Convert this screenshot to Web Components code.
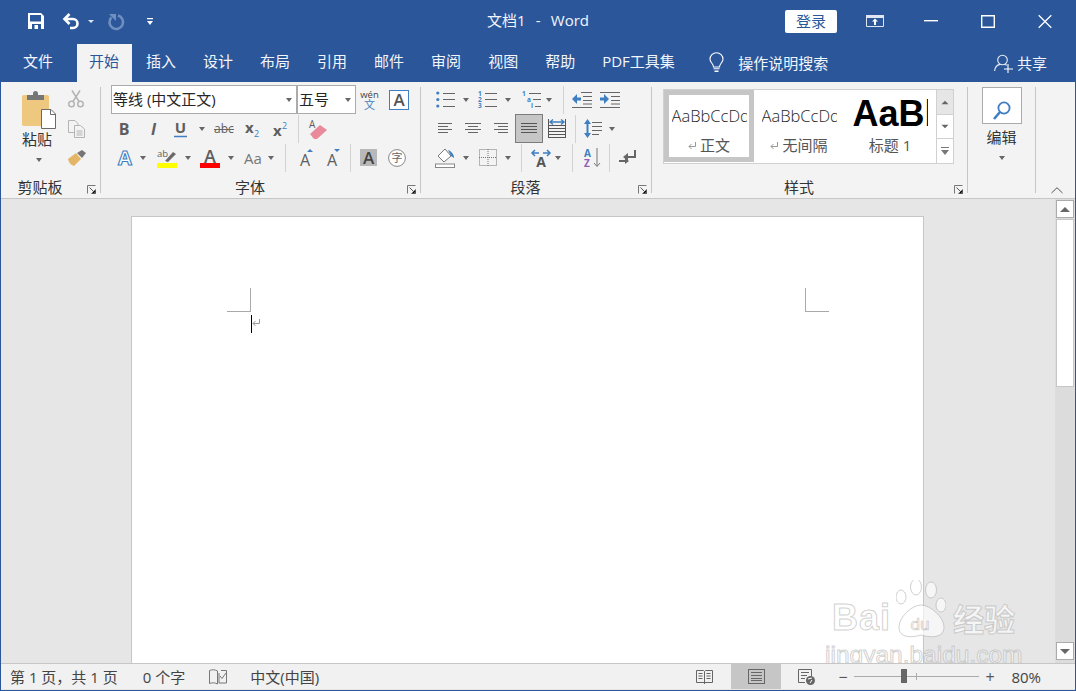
<!DOCTYPE html>
<html lang="zh-CN">
<head>
<meta charset="utf-8">
<title>文档1 - Word</title>
<style>
  html, body { margin: 0; height: 100%; overflow: hidden; background: #e6e6e6; }
  body { font-family: "Open Sans", "Noto Sans CJK SC", sans-serif; }
</style>
</head>
<body>
<word-app></word-app>
<script>
const FONT = `"Open Sans","Noto Sans CJK SC",sans-serif`;
const G = "#5e5e5e", B = "#3f7fc1", LG = "#b4b4b4";

// name: [width, height, svg inner]
const ICONS = {
  save: [16, 16, `<path fill="#fff" d="M0 0H13L16 3V16H0Z"/><path fill="#2b579a" d="M2 2H13V8.5H2ZM4 11H13V16H4Z"/><path fill="#fff" d="M6.5 12H10V16H6.5Z"/>`],
  undo: [18, 16, `<path fill="none" stroke="#fff" stroke-width="2.6" d="M3 6H11A4.5 4.5 0 0 1 11 15H8"/><path fill="none" stroke="#fff" stroke-width="2.6" d="M7.5 1L2.5 6L7.5 11"/>`],
  redo: [17, 17, `<path fill="none" stroke="#6f8fbf" stroke-width="2.6" d="M11 2.6A6.8 6.8 0 1 1 4.4 4.4"/><path fill="#6f8fbf" d="M2 1H9V8Z"/>`],
  arrowW: [6, 3, `<path fill="#dfe6f1" d="M0 0H6L3 3Z"/>`],
  custom: [6, 7, `<path fill="#fff" d="M0 0H6V1.3H0ZM0 3H6L3 7Z"/>`],
  display: [18, 12, `<path fill="none" stroke="#dfe6f1" stroke-width="1" d="M.5 .5H17.5V11.5H.5Z"/><path fill="#dfe6f1" d="M0 0H18V3H0Z"/><path fill="#fff" d="M9 3.5L12 6.5H10V10H8V6.5H6Z"/>`],
  min: [14, 2, `<path fill="#fff" d="M0 0H14V1.4H0Z"/>`],
  max: [14, 13, `<path fill="none" stroke="#fff" stroke-width="1.4" d="M.7 .7H13.3V12.3H.7Z"/>`],
  close: [14, 13, `<path fill="none" stroke="#fff" stroke-width="1.3" d="M.7 .2L13.3 12.8M13.3 .2L.7 12.8"/>`],
  bulb: [15, 20, `<path fill="none" stroke="#fff" stroke-width="1.1" d="M4.5 14C4.5 10.5 1 9.5 1 6.2A6.5 6.5 0 0 1 14 6.2C14 9.5 10.5 10.5 10.5 14Z"/><path fill="#fff" d="M4.5 15.2H10.5V16.3H4.5ZM5.5 17.5H9.5V19H5.5Z"/>`],
  person: [19, 19, `<g fill="none" stroke="#e8edf5" stroke-width="1.1"><circle cx="8.5" cy="6" r="4.8"/><path d="M.6 17C1 12.5 4 10.8 6 10.4M11 10.4L13 11.3"/><path stroke="#fff" d="M14 10V19M10 15H19"/></g>`],
  paste: [34, 38, `<rect y="4" width="27" height="31" rx="2" fill="#edc87e"/><path fill="#767676" d="M5 4H11V2.5A2.5 2.5 0 0 1 16 2.5V4H22V9H5Z"/><path fill="#fff" stroke="#6a6a6a" d="M19.5 18.5H29L33.5 23V37.5H19.5Z"/><path fill="none" stroke="#6a6a6a" d="M28.5 18.5V23.5H33.5"/>`],
  cut: [16, 18, `<g fill="none" stroke="${LG}" stroke-width="1.5"><circle cx="3.5" cy="14" r="2.8"/><circle cx="12.5" cy="14" r="2.8"/><path d="M5 11.5L12 .5M11 11.5L4 .5"/></g>`],
  copy: [17, 18, `<g fill="#f3f3f3" stroke="${LG}"><path d="M.5 .5H7L10 3.5V12.5H.5Z"/><path d="M6.5 5.5H12.5L16.5 9V17.5H6.5Z"/></g><path stroke="${LG}" d="M8.5 11H14.5M8.5 13H14.5M8.5 15H14.5"/>`],
  painter: [18, 16, `<path fill="#e3b565" d="M0 9L8 3L13 9L6 16C3 15 1 13 0 9Z"/><path fill="#767676" d="M9 3L14 0L18 3L14 8Z"/>`],
  wen: [17, 19, `<text x="8.5" y="8" font-size="9.5" text-anchor="middle" fill="#444" font-family='${FONT}'>wén</text><text x="8.5" y="19" font-size="11" text-anchor="middle" fill="${B}" font-family='${FONT}'>文</text>`],
  aBox: [20, 20, `<rect x=".5" y=".5" width="19" height="19" fill="#fff" stroke="${B}"/><text x="10" y="16" font-size="17" text-anchor="middle" fill="#555" font-weight="600" font-family='${FONT}'>A</text>`],
  arrow: [6, 4, `<path fill="#666" d="M0 0H6L3 4Z"/>`],
  bold: [12, 16, `<text x="6" y="14" font-size="16" font-weight="700" text-anchor="middle" fill="${G}" font-family='${FONT}'>B</text>`],
  italic: [13, 16, `<text x="6.5" y="14" font-size="16" font-weight="700" font-style="italic" text-anchor="middle" fill="${G}" font-family='${FONT}'>I</text>`],
  under: [13, 18, `<text x="6.5" y="13" font-size="15" font-weight="700" text-anchor="middle" fill="${G}" font-family='${FONT}'>U</text><path stroke="${B}" stroke-width="1.5" d="M0 16.5H13"/>`],
  strike: [20, 14, `<text x="10" y="11" font-size="12" text-anchor="middle" fill="${G}" font-family='${FONT}'>abc</text><path stroke="#666" d="M0 7.5H20"/>`],
  sub: [15, 16, `<text x="0" y="12" font-size="15" font-weight="700" fill="${G}" font-family='${FONT}'>x</text><text x="9" y="16" font-size="9" fill="${B}" font-family='${FONT}'>2</text>`],
  sup: [15, 16, `<text x="0" y="15" font-size="15" font-weight="700" fill="${G}" font-family='${FONT}'>x</text><text x="9" y="8" font-size="9" fill="${B}" font-family='${FONT}'>2</text>`],
  eraser: [19, 20, `<text x="0" y="9" font-size="10" fill="${G}" font-family='${FONT}'>A</text><path fill="#e98a9b" d="M1 15L11 6L18 11L8 20H5Z"/>`],
  effect: [16, 18, `<text x="8" y="16" font-size="20" font-weight="700" text-anchor="middle" fill="#fff" stroke="${B}" stroke-width="1.1" font-family='${FONT}'>A</text>`],
  hilite: [20, 20, `<text x="0" y="9" font-size="9.5" fill="${G}" font-family='${FONT}'>ab</text><path fill="#6a6a6a" d="M8 13L16 4L19 6L11 14Z"/><rect y="15" width="20" height="5" fill="#ff0"/>`],
  color: [20, 20, `<text x="10" y="14.5" font-size="18" font-weight="600" text-anchor="middle" fill="${G}" font-family='${FONT}'>A</text><rect y="15" width="20" height="5" fill="#f00"/>`],
  case: [18, 16, `<text x="9" y="14" font-size="15" text-anchor="middle" fill="#777" font-family='${FONT}'>Aa</text>`],
  grow: [14, 18, `<text x="6" y="17" font-size="16" text-anchor="middle" fill="${G}" font-family='${FONT}'>A</text><path fill="${B}" d="M8 3L11 0L14 3Z"/>`],
  shrink: [14, 18, `<text x="6" y="17" font-size="16" text-anchor="middle" fill="${G}" font-family='${FONT}'>A</text><path fill="${B}" d="M8 0H14L11 3Z"/>`],
  shade: [17, 17, `<rect width="17" height="17" fill="#b8b8b8"/><text x="8.5" y="15" font-size="17" font-weight="600" text-anchor="middle" fill="#444" font-family='${FONT}'>A</text>`],
  ring: [18, 18, `<circle cx="9" cy="9" r="8.4" fill="#fff" stroke="#888"/><text x="9" y="13" font-size="11" text-anchor="middle" fill="#666" font-family='${FONT}'>字</text>`],
  bullets: [19, 17, `<g fill="${B}"><circle cx="1.8" cy="2" r="1.6"/><circle cx="1.8" cy="8.5" r="1.6"/><circle cx="1.8" cy="15" r="1.6"/></g><path stroke="#666" d="M7 2.5H19M7 8.5H19M7 15.5H19"/>`],
  nums: [19, 17, `<g fill="${B}" font-size="6.5" font-weight="700" font-family='${FONT}'><text x="0" y="5">1</text><text x="0" y="11">2</text><text x="0" y="17">3</text></g><path stroke="#666" d="M7 2.5H19M7 8.5H19M7 15.5H19"/>`],
  multi: [19, 17, `<g fill="${B}" font-size="6.5" font-weight="700" font-family='${FONT}'><text x="0" y="5">1</text><text x="5" y="11">a</text><text x="9" y="17">i</text></g><path stroke="#666" d="M7 2.5H19M11 8.5H19M13 15.5H19"/>`],
  outdent: [20, 16, `<path stroke="#666" d="M9 .5H20M11 4.5H20M11 8.5H20M11 12H20M0 15.5H20"/><path fill="${B}" d="M0 7L5 2V5.5H9V8.5H5V12Z"/>`],
  indent: [20, 16, `<path stroke="#666" d="M0 .5H20M11 4.5H20M11 8.5H20M11 12H20M0 15.5H20"/><path fill="${B}" d="M9 7L4 2V5.5H0V8.5H4V12Z"/>`],
  left: [14, 11, `<path stroke="#666" d="M0 .5H14M0 3.5H10M0 6.5H14M0 9.5H10"/>`],
  center: [16, 11, `<path stroke="#666" d="M0 .5H16M3 3.5H13M0 6.5H16M3 9.5H13"/>`],
  right: [14, 11, `<path stroke="#666" d="M0 .5H14M4 3.5H14M0 6.5H14M4 9.5H14"/>`],
  justifyOn: [28, 29, `<rect x=".5" y=".5" width="27" height="28" fill="#c6c6c6" stroke="#7c7c7c"/><path stroke="#555" d="M6 9.5H22M6 12.5H22M6 15.5H22M6 18.5H22"/>`],
  dist: [18, 19, `<path stroke="#555" d="M0 6.5H18M0 9.5H18M0 12.5H18M0 15.5H18M0 18.5H18M.5 0V19M17.5 0V19"/><path fill="none" stroke="${B}" stroke-width="1.4" d="M2 3H16M5 .5L2 3L5 5.5M13 .5L16 3L13 5.5"/>`],
  spacing: [18, 19, `<path stroke="#666" d="M8 3.5H18M8 7.5H18M8 11.5H18M8 15.5H15"/><path fill="${B}" d="M3.5 0L7 5H4.5V14H7L3.5 19L0 14H2.5V5H0Z"/>`],
  fill: [20, 20, `<path fill="#fff" stroke="#777" d="M3 8L10 1L16 8L9 14Z"/><path fill="${B}" d="M13 2C16 3 19 6 19 10L16 8Z"/><rect x=".5" y="16" width="19" height="3.5" fill="#fff" stroke="#888"/>`],
  border: [18, 17, `<path fill="none" stroke="#777" stroke-dasharray="1 1" d="M.5 .5H17.5V16.5H.5ZM9 0V17M0 8.5H18"/>`],
  dir: [20, 18, `<text x="10" y="18" font-size="14" font-weight="700" text-anchor="middle" fill="#555" font-family='${FONT}'>A</text><path fill="none" stroke="${B}" stroke-width="1.5" d="M1 4H8M4 1L1 4L4 7M12 4H19M16 1L19 4L16 7"/>`],
  sort: [17, 19, `<text x="0" y="9" font-size="10" font-weight="700" fill="${B}" font-family='${FONT}'>A</text><text x="0" y="19" font-size="10" font-weight="700" fill="#8e5fb4" font-family='${FONT}'>Z</text><path fill="none" stroke="#777" d="M13 0V18M10 15L13 18.5L16 15"/>`],
  pilcrow: [17, 15, `<path fill="none" stroke="#666" stroke-width="2" d="M16 0V7H7"/><path fill="#666" d="M9 3V11L4 7Z"/><path stroke="#666" stroke-width="2" d="M0 11H8"/><path fill="#666" d="M6 8V14L10 11Z"/>`],
  launcher: [9, 9, `<path fill="none" stroke="#777" d="M.5 8.5V.5H8.5"/><path stroke="#555" d="M2.5 2.5L8 8M4.5 8.5H8.5V4.5"/>`],
  search: [18, 19, `<circle cx="11" cy="7" r="5.6" fill="none" stroke="${B}" stroke-width="1.8"/><path stroke="${B}" stroke-width="2.6" d="M7 11L1 18"/>`],
  chevron: [12, 6, `<path fill="none" stroke="#555" d="M.5 6L6 .7L11.5 6"/>`],
  up: [10, 5, `<path fill="#666" d="M0 5L5 0L10 5Z"/>`],
  down: [10, 5, `<path fill="#666" d="M0 0H10L5 5Z"/>`],
  more: [8, 8, `<path fill="#777" d="M0 0H8V1H0ZM0 3H8L4 8Z"/>`],
  proof: [18, 16, `<path fill="none" stroke="#777" d="M.5 1.5C3 .5 6 .5 8.5 2V15C6 13.5 3 13.5 .5 14.5ZM10 4V14L17.5 14V1.5L12 1.5"/><path fill="none" stroke="#777" d="M11 7L13 9.5L17 4"/>`],
  read: [17, 16, `<path fill="none" stroke="#666" d="M.5 1.5H7.5L8.5 2.5L9.5 1.5H16.5V13.5H.5ZM8.5 2.5V15"/><path stroke="#666" d="M2.5 4.5H6.5M2.5 7H6.5M2.5 9.5H6.5M10.5 4.5H14.5M10.5 7H14.5M10.5 9.5H14.5"/>`],
  print: [17, 15, `<rect x=".5" y=".5" width="16" height="14" fill="none" stroke="#666"/><path stroke="#666" d="M3 3.5H14M3 6.5H14M3 9.5H14M3 11.5H14"/>`],
  web: [17, 16, `<path fill="none" stroke="#666" d="M.5 .5H13.5V8M.5 .5V13.5H7"/><path stroke="#666" d="M3 3.5H11M3 6.5H9M3 9.5H7"/><circle cx="12.5" cy="11.5" r="4.5" fill="#666"/><path stroke="#fff" d="M10 10L14 9M12 14L14 11"/>`],
  ret: [8, 9, `<path fill="none" stroke="#999" d="M7.5 1V5.5H1"/><path fill="none" stroke="#999" d="M3.5 3L1 5.5L3.5 8"/>`],
};

class WordIcon extends HTMLElement {
  connectedCallback() {
    if (this.shadowRoot) return;
    const [w, h, inner] = ICONS[this.getAttribute("n")];
    const ml = this.getAttribute("m") || 0;
    this.attachShadow({ mode: "open" }).innerHTML = `
      <style>:host { display: block; flex: none; margin-left: ${ml}px; width: ${w}px; height: ${h}px; line-height: 0; }
      svg { display: block; overflow: visible; }</style>
      <svg width="${w}" height="${h}" viewBox="0 0 ${w} ${h}">${inner}</svg>`;
  }
}

class ToolRow extends HTMLElement {
  constructor() {
    super();
    this.attachShadow({ mode: "open" }).innerHTML = `
      <style>:host { display: flex; align-items: center; height: 29px; }</style><slot></slot>`;
  }
}

class ToolSep extends HTMLElement {
  connectedCallback() {
    if (this.shadowRoot) return;
    const ml = this.getAttribute("m") || 0;
    this.attachShadow({ mode: "open" }).innerHTML = `
      <style>:host { display: block; flex: none; width: 1px; height: 28px; background: #d2d2d2; margin-left: ${ml}px; }</style>`;
  }
}

class FontCombo extends HTMLElement {
  connectedCallback() {
    if (this.shadowRoot) return;
    const w = this.getAttribute("w"), ml = this.getAttribute("m") || 0;
    this.attachShadow({ mode: "open" }).innerHTML = `
      <style>
        :host { display: flex; align-items: center; justify-content: space-between; flex: none; box-sizing: border-box;
          width: ${w}px; height: 29px; margin-left: ${ml}px; padding: 0 4px 2px 1px; background: #fff; border: 1px solid #ababab;
          font-size: 15px; color: #262626; white-space: nowrap; }
        word-icon { margin-top: 2px; }
      </style><slot></slot><word-icon n="arrow"></word-icon>`;
  }
}

class RibbonGroup extends HTMLElement {
  connectedCallback() {
    if (this.shadowRoot) return;
    const w = this.getAttribute("w");
    const label = this.getAttribute("label");
    const launch = this.hasAttribute("launch");
    this.attachShadow({ mode: "open" }).innerHTML = `
      <style>
        :host { display: flex; flex-direction: column; flex: none; position: relative; width: ${w}px; height: 112px; box-sizing: border-box; }
        :host::after { content: ""; position: absolute; right: 0; top: 2px; bottom: 4px; width: 1px; background: #c6c6c6; }
        .body { height: 94px; }
        .foot { position: relative; height: 18px; line-height: 16px; text-align: center; font-size: 15px; color: #333; padding-right: 22px; }
        word-icon { position: absolute; right: 5px; bottom: 3px; }
      </style>
      <div class="body"><slot></slot></div>
      <div class="foot">${label}${launch ? '<word-icon n="launcher"></word-icon>' : ""}</div>`;
  }
}

class StyleItem extends HTMLElement {
  connectedCallback() {
    if (this.shadowRoot) return;
    const sel = this.hasAttribute("selected");
    const big = this.hasAttribute("big");
    const mark = this.hasAttribute("mark");
    this.attachShadow({ mode: "open" }).innerHTML = `
      <style>
        :host { display: flex; flex-direction: column; align-items: center; flex: none; box-sizing: border-box; width: ${this.getAttribute("w")}px; height: 72px;
          ${sel ? "border: 5px solid #c6c6c6;" : "padding: 5px;"} overflow: hidden; }
        .s { height: 40px; width: 75px; overflow: hidden; white-space: nowrap; text-align: left; line-height: 42px;
          ${big ? `font: 700 36px/38px "Liberation Sans", sans-serif; color: #000;` : `font-size: 16.5px; font-weight: 300; color: #1f1f1f; font-family: "Open Sans", sans-serif;`} }
        .l { display: flex; align-items: center; gap: 4px; height: 20px; font-size: 15px; line-height: 20px; color: #555; }
      </style>
      <div class="s">${this.getAttribute("sample")}</div>
      <div class="l">${mark ? '<word-icon n="ret"></word-icon>' : ""}<slot></slot></div>`;
  }
}

class WordTitlebar extends HTMLElement {
  constructor() {
    super();
    this.attachShadow({ mode: "open" }).innerHTML = `
      <style>
        :host { display: grid; grid-template-columns: 1fr auto 1fr; align-items: center; height: 42px; background: #2b579a; color: #fff; }
        .qat, .win { display: flex; align-items: center; }
        .win { justify-content: flex-end; }
        .title { font-size: 15px; white-space: pre; word-spacing: 1.2px; color: #f2f5fa; margin-top: -3px; }
        .login { margin-right: 29px; width: 52px; height: 23px; line-height: 23px; text-align: center; background: #fff; color: #2b579a; font-size: 15px; border-radius: 2px; }
      </style>
      <div class="qat">
        <word-icon n="save" m="27"></word-icon>
        <word-icon n="undo" m="18"></word-icon>
        <word-icon n="arrowW" m="8"></word-icon>
        <word-icon n="redo" m="13"></word-icon>
        <word-icon n="custom" m="23"></word-icon>
      </div>
      <div class="title">文档1  -  Word</div>
      <div class="win">
        <div class="login">登录</div>
        <word-icon n="display"></word-icon>
        <word-icon n="min" m="40"></word-icon>
        <word-icon n="max" m="43"></word-icon>
        <word-icon n="close" m="43" style="margin-right:23px"></word-icon>
      </div>`;
  }
}

class WordTabs extends HTMLElement {
  constructor() {
    super();
    const tabs = ["插入", "设计", "布局", "引用", "邮件", "审阅", "视图", "帮助", "PDF工具集"];
    this.attachShadow({ mode: "open" }).innerHTML = `
      <style>
        :host { display: flex; align-items: flex-end; height: 40px; background: #2b579a; color: #f2f5fa; font-size: 15px; padding-left: 9.5px; }
        .t { height: 38px; line-height: 35px; padding: 0 12.5px; margin-right: 2px; white-space: nowrap; }
        .on { background: #f3f3f3; color: #2b579a; }
        .file { margin-right: 11px; }
        .tell { display: flex; align-items: center; height: 38px; margin-left: 20px; }
        .tell span { margin-left: 14px; line-height: 35px; }
        .share { display: flex; align-items: center; height: 38px; margin-left: auto; margin-right: 28px; gap: 4px; }
        .share span { line-height: 35px; }
      </style>
      <div class="t file">文件</div><div class="t on">开始</div>
      ${tabs.map(t => `<div class="t">${t}</div>`).join("")}
      <div class="tell"><word-icon n="bulb"></word-icon><span>操作说明搜索</span></div>
      <div class="share"><word-icon n="person"></word-icon><span>共享</span></div>`;
  }
}

class WordRibbon extends HTMLElement {
  constructor() {
    super();
    this.attachShadow({ mode: "open" }).innerHTML = `
      <style>
        :host { display: flex; position: relative; height: 117px; box-sizing: border-box; padding-top: 3px; background: #f3f3f3; border-bottom: 1px solid #c6c6c6; font-size: 15px; color: #333; }
        .clip { display: grid; grid-template-columns: 67px 1fr; padding-top: 6px; }
        .paste { display: flex; flex-direction: column; align-items: center; margin-left: 22px; width: 32px; }
        .paste span { margin: 1px 4px 0 0; line-height: 19px; white-space: nowrap; }
        .paste word-icon:last-child { margin-top: 9px; }
        .small { display: flex; flex-direction: column; gap: 12px; margin-top: -1px; }
        .gallery { display: flex; box-sizing: border-box; width: 291px; height: 75px; margin: 4px 0 0 11px; background: #fff; border: 1px solid #d0d0d0; }
        .g-scroll { display: flex; flex-direction: column; width: 18px; margin-left: auto; }
        .g-scroll div { display: flex; align-items: center; justify-content: center; background: #fff; border-left: 1px solid #d0d0d0; border-bottom: 1px solid #d0d0d0; height: 24px; box-sizing: border-box; flex: none; }
        .g-scroll div:first-child { background: #e6e6e6; height: 25px; }
        .g-scroll div:last-child { border-bottom: 0; }
        .edit { display: flex; flex-direction: column; align-items: center; padding: 2px 1px 0 0; }
        .find { display: flex; align-items: center; justify-content: center; box-sizing: border-box; width: 40px; height: 37px; background: #fff; border: 1px solid #ababab; }
        .edit span { margin-top: 3px; line-height: 20px; }
        .edit word-icon:last-child { margin-top: 9px; }
        .collapse { position: absolute; right: 12px; bottom: 5px; }
      </style>
      <ribbon-group w="100" label="剪贴板" launch>
        <div class="clip">
          <div class="paste"><word-icon n="paste"></word-icon><span>粘贴</span><word-icon n="arrow"></word-icon></div>
          <div class="small"><word-icon n="cut"></word-icon><word-icon n="copy"></word-icon><word-icon n="painter"></word-icon></div>
        </div>
      </ribbon-group>

      <ribbon-group w="320" label="字体" launch>
        <tool-row>
          <font-combo w="186" m="10">等线 (中文正文)</font-combo>
          <font-combo w="59" m="0">五号</font-combo>
          <word-icon n="wen" m="5"></word-icon>
          <word-icon n="aBox" m="11"></word-icon>
        </tool-row>
        <tool-row>
          <word-icon n="bold" m="17"></word-icon><word-icon n="italic" m="17"></word-icon>
          <word-icon n="under" m="14"></word-icon><word-icon n="arrow" m="12"></word-icon>
          <word-icon n="strike" m="9"></word-icon><word-icon n="sub" m="11"></word-icon>
          <word-icon n="sup" m="13"></word-icon><tool-sep m="10"></tool-sep>
          <word-icon n="eraser" m="10"></word-icon>
        </tool-row>
        <tool-row>
          <word-icon n="effect" m="16"></word-icon><word-icon n="arrow" m="7"></word-icon>
          <word-icon n="hilite" m="11"></word-icon><word-icon n="arrow" m="8"></word-icon>
          <word-icon n="color" m="9"></word-icon><word-icon n="arrow" m="8"></word-icon>
          <word-icon n="case" m="10"></word-icon><word-icon n="arrow" m="6"></word-icon>
          <tool-sep m="11"></tool-sep>
          <word-icon n="grow" m="13"></word-icon><word-icon n="shrink" m="13"></word-icon>
          <tool-sep m="10"></tool-sep>
          <word-icon n="shade" m="9"></word-icon><word-icon n="ring" m="11"></word-icon>
        </tool-row>
      </ribbon-group>

      <ribbon-group w="231" label="段落" launch>
        <tool-row>
          <word-icon n="bullets" m="15"></word-icon><word-icon n="arrow" m="8"></word-icon>
          <word-icon n="nums" m="9"></word-icon><word-icon n="arrow" m="8"></word-icon>
          <word-icon n="multi" m="11"></word-icon><word-icon n="arrow" m="5"></word-icon>
          <tool-sep m="11"></tool-sep>
          <word-icon n="outdent" m="8"></word-icon><word-icon n="indent" m="8"></word-icon>
        </tool-row>
        <tool-row>
          <word-icon n="left" m="17"></word-icon><word-icon n="center" m="13"></word-icon>
          <word-icon n="right" m="13"></word-icon><word-icon n="justifyOn" m="7"></word-icon>
          <word-icon n="dist" m="5"></word-icon><tool-sep m="9"></tool-sep>
          <word-icon n="spacing" m="8"></word-icon><word-icon n="arrow" m="7"></word-icon>
        </tool-row>
        <tool-row>
          <word-icon n="fill" m="14"></word-icon><word-icon n="arrow" m="8"></word-icon>
          <word-icon n="border" m="10"></word-icon><word-icon n="arrow" m="8"></word-icon>
          <tool-sep m="10"></tool-sep>
          <word-icon n="dir" m="9"></word-icon><word-icon n="arrow" m="4"></word-icon>
          <tool-sep m="11"></tool-sep>
          <word-icon n="sort" m="11"></word-icon><tool-sep m="8"></tool-sep>
          <word-icon n="pilcrow" m="9"></word-icon>
        </tool-row>
      </ribbon-group>

      <ribbon-group w="316" label="样式" launch>
        <div class="gallery">
          <style-item w="90" sample="AaBbCcDd" mark selected>正文</style-item>
          <style-item w="90" sample="AaBbCcDd" mark>无间隔</style-item>
          <style-item w="92" sample="AaBbC" big>标题 1</style-item>
          <div class="g-scroll">
            <div><word-icon n="up" style="transform:scale(.7)"></word-icon></div>
            <div><word-icon n="down" style="transform:scale(.7)"></word-icon></div>
            <div><word-icon n="more"></word-icon></div>
          </div>
        </div>
      </ribbon-group>

      <ribbon-group w="68" label="">
        <div class="edit">
          <div class="find"><word-icon n="search"></word-icon></div>
          <span>编辑</span>
          <word-icon n="arrow"></word-icon>
        </div>
      </ribbon-group>
      <word-icon class="collapse" n="chevron"></word-icon>`;
  }
}

class BaiduMark extends HTMLElement {
  constructor() {
    super();
    this.attachShadow({ mode: "open" }).innerHTML = `
      <style>
        :host { display: block; position: absolute; left: 824px; top: 381px; width: 200px; height: 90px; pointer-events: none; font-family: "Liberation Sans", sans-serif; color: rgba(255,255,255,.65); -webkit-text-stroke: 1px rgba(170,170,170,.55); }
        .top { display: flex; align-items: flex-end; height: 60px; }
        .bai { width: 55px; margin: 0 0 5px 7px; font-size: 36px; line-height: 34px; font-weight: 700; letter-spacing: 1px; flex: none; }
        svg { width: 50px; height: 60px; flex: none; margin-left: 9px; }
        .jy { font-family: "Noto Sans CJK SC", sans-serif; font-size: 31px; line-height: 36px; font-weight: 700; margin: 0 0 4px 7px; white-space: nowrap; }
        .url { font-size: 24.5px; line-height: 24px; margin-top: 3px; white-space: nowrap; }
      </style>
      <div class="top">
        <span class="bai">Bai</span>
        <svg viewBox="0 0 50 60">
          <g fill="rgba(255,255,255,.65)" stroke="rgba(170,170,170,.55)">
            <ellipse cx="5" cy="17" rx="5" ry="7"/><ellipse cx="20" cy="7" rx="5.5" ry="8"/>
            <ellipse cx="35" cy="10" rx="5.5" ry="8"/><ellipse cx="45" cy="25" rx="5" ry="7"/>
            <path d="M3 47C3 37 16 25 25 25C34 25 48 37 48 47C48 58 35 58 25 55C15 58 3 58 3 47Z"/>
          </g>
          <text x="24" y="50" font-size="17" text-anchor="middle" font-family="Liberation Sans" fill="rgba(255,255,255,.5)" stroke="rgba(170,170,170,.65)" stroke-width=".7">du</text>
        </svg>
        <span class="jy">经验</span>
      </div>
      <div class="url">jingyan.baidu.com</div>`;
  }
}

class WordWorkspace extends HTMLElement {
  constructor() {
    super();
    this.attachShadow({ mode: "open" }).innerHTML = `
      <style>
        :host { display: flex; position: relative; height: 464px; background: #e6e6e6; overflow: hidden; }
        .area { flex: 1; display: flex; justify-content: center; padding-top: 17px; min-width: 0; }
        .page { box-sizing: border-box; width: 793px; height: 700px; flex: none; background: #fff; border: 1px solid #c6c6c6; padding: 71px 94px 0 95px; margin-left: -1px; }
        .marks { display: flex; justify-content: space-between; }
        .mk { width: 23px; height: 23px; }
        .mk.l { border-right: 1px solid #a9a9a9; border-bottom: 1px solid #a9a9a9; }
        .mk.r { border-left: 1px solid #a9a9a9; border-bottom: 1px solid #a9a9a9; }
        .line { display: flex; align-items: flex-start; margin: 3px 0 0 24px; }
        .caret { width: 1px; height: 18px; background: #000; }
        .line word-icon { margin-top: 3px; }
        .bar { display: flex; flex-direction: column; width: 20px; flex: none; box-sizing: border-box; padding: 1px 1px 3px 1px; background: #dcdcdc; gap: 1px; }
        .btn { display: flex; align-items: center; justify-content: center; box-sizing: border-box; height: 18px; background: #fff; border: 1px solid #ababab; flex: none; }
        .thumb { height: 168px; background: #fff; border: 1px solid #c6c6c6; box-sizing: border-box; flex: none; }
        .btn.dn { margin-top: auto; }
      </style>
      <div class="area">
        <div class="page">
          <div class="marks"><div class="mk l"></div><div class="mk r"></div></div>
          <div class="line"><div class="caret"></div><word-icon n="ret"></word-icon></div>
        </div>
      </div>
      <div class="bar">
        <div class="btn"><word-icon n="up"></word-icon></div>
        <div class="thumb"></div>
        <div class="btn dn"><word-icon n="down"></word-icon></div>
      </div>
      <baidu-mark></baidu-mark>`;
  }
}

class WordStatus extends HTMLElement {
  constructor() {
    super();
    this.attachShadow({ mode: "open" }).innerHTML = `
      <style>
        :host { display: flex; align-items: center; height: 26px; box-sizing: border-box; background: #f1f1f1; border-top: 1px solid #c6c6c6; font-size: 15px; color: #444; white-space: pre; padding-left: 9px; }
        .view { display: flex; align-items: center; height: 25px; margin-left: auto; }
        .on { display: flex; align-items: center; justify-content: center; width: 50px; height: 25px; background: #c6c6c6; margin-left: 17px; }
        .zoom { display: flex; align-items: center; margin-left: 23px; }
        .pm { font-size: 16px; line-height: 16px; width: 9px; text-align: center; color: #555; }
        .slide { position: relative; width: 125px; height: 1px; background: #aaa; margin: 0 6px 0 7px; }
        .tick { position: absolute; left: 62px; top: -3px; width: 1px; height: 7px; background: #aaa; }
        .knob { position: absolute; left: 47px; top: -7px; width: 6px; height: 14px; background: #666; }
        .pct { margin: 0 34px 0 17px; }
        .read { margin-right: 1px; }
      </style>
      <span>第 1 页，共 1 页</span>
      <span style="margin-left:25px">0 个字</span>
      <word-icon n="proof" m="24"></word-icon>
      <span style="margin-left:23px">中文(中国)</span>
      <div class="view">
        <word-icon class="read" n="read"></word-icon>
        <div class="on"><word-icon n="print"></word-icon></div>
        <word-icon n="web" m="17"></word-icon>
        <div class="zoom">
          <span class="pm">−</span>
          <div class="slide"><i class="tick"></i><i class="knob"></i></div>
          <span class="pm">+</span>
          <span class="pct">80%</span>
        </div>
      </div>`;
  }
}

class WordApp extends HTMLElement {
  constructor() {
    super();
    this.attachShadow({ mode: "open" }).innerHTML = `
      <style>
        :host { display: flex; flex-direction: column; box-sizing: border-box; width: 1076px; height: 691px; border: 1px solid #2b579a; border-top: 0; overflow: hidden; }
      </style>
      <word-titlebar></word-titlebar>
      <word-tabs></word-tabs>
      <word-ribbon></word-ribbon>
      <word-workspace></word-workspace>
      <word-status></word-status>`;
  }
}

customElements.define("word-icon", WordIcon);
customElements.define("tool-row", ToolRow);
customElements.define("tool-sep", ToolSep);
customElements.define("font-combo", FontCombo);
customElements.define("ribbon-group", RibbonGroup);
customElements.define("style-item", StyleItem);
customElements.define("word-titlebar", WordTitlebar);
customElements.define("word-tabs", WordTabs);
customElements.define("word-ribbon", WordRibbon);
customElements.define("baidu-mark", BaiduMark);
customElements.define("word-workspace", WordWorkspace);
customElements.define("word-status", WordStatus);
customElements.define("word-app", WordApp);
</script>
</body>
</html>
